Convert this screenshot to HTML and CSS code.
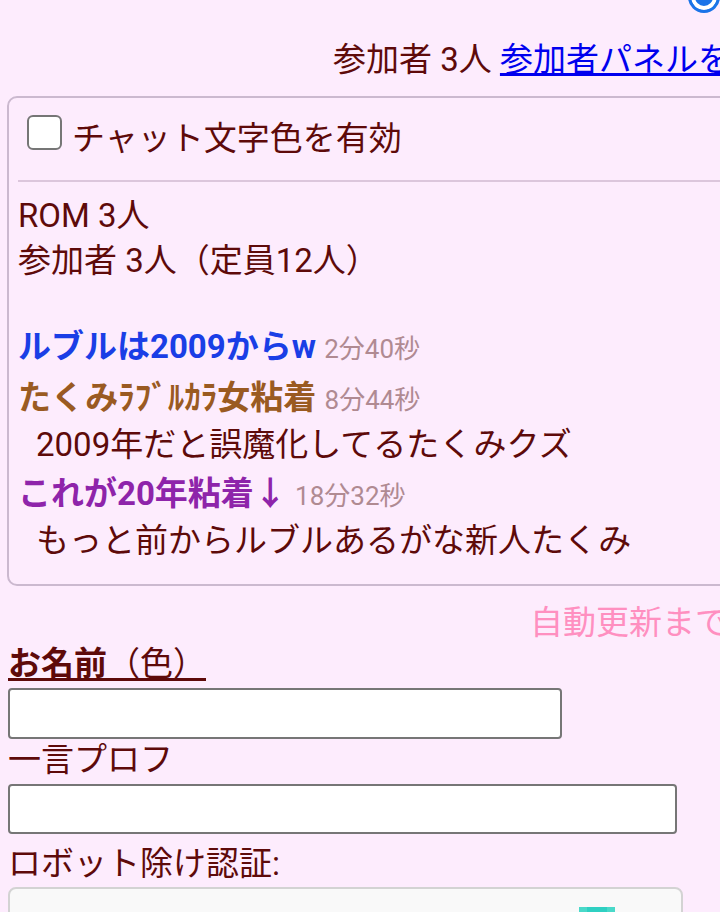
FILE: index.html
```html
<!DOCTYPE html>
<html lang="ja">
<head>
  <meta charset="UTF-8">
  <meta name="viewport" content="width=device-width, initial-scale=1.0">
  <title>チャット</title>
  <link rel="stylesheet" href="styles.css">
</head>
<body>

<!-- 上部 -->
<div class="top-row">
  <span class="radio checked"></span>
</div>

<div class="members">参加者 3人 <a href="#">参加者パネルを表示</a></div>

<!-- ログ -->
<div class="card">
  <div class="color-row">
    <span class="checkbox"></span>
    <span>チャット文字色を有効</span>
  </div>
  <hr class="sep">
  <div class="counts">
    <div>ROM 3人</div>
    <div>参加者 3人（定員12人）</div>
  </div>

  <div class="posts">
    <div class="post">
      <div class="name blue">ルブルは2009からw <span class="time">2分40秒</span></div>
    </div>
    <div class="post">
      <div class="name brown">たくみﾗﾌﾞﾙｶﾗ女粘着 <span class="time">8分44秒</span></div>
      <div class="msg">2009年だと誤魔化してるたくみクズ</div>
    </div>
    <div class="post">
      <div class="name purple">これが20年粘着↓ <span class="time">18分32秒</span></div>
      <div class="msg">もっと前からルブルあるがな新人たくみ</div>
    </div>
  </div>
</div>

<div class="reload">自動更新まで 30秒</div>

<!-- 投稿フォーム -->
<form class="form">
  <label class="label name-label"><b>お名前</b>（色）</label>
  <input type="text" class="field field-name">
  <label class="label">一言プロフ</label>
  <input type="text" class="field field-prof">
  <label class="label captcha-label">ロボット除け認証:</label>
  <div class="captcha">
    <svg class="captcha-logo" width="36" height="36" viewBox="0 0 36 36">
      <rect x="0" y="0" width="36" height="36" fill="#4ad9c9"/>
      <rect x="8" y="0" width="20" height="36" fill="#2fd0c2"/>
    </svg>
  </div>
</form>

</body>
</html>
```

FILE: styles.css
```css
* { box-sizing: border-box; }

body {
  margin: 0;
  padding: 0 0 0 8px;
  background-color: #fdecfd;
  color: #5e0a0a;
  font-family: Roboto, "Noto Sans CJK JP", sans-serif;
  font-size: 33px;
  overflow: hidden;
}

.top-row {
  display: flex;
  justify-content: flex-end;
  height: 32px;
  margin-top: -19px;
}

.radio {
  width: 32px;
  height: 32px;
  border-radius: 50%;
  border: 3px solid #1a73e8;
  background: #1a73e8;
  box-shadow: inset 0 0 0 4px #fff;
}

.members {
  margin-top: 24px;
  padding-left: 325px;
  line-height: 45px;
  white-space: nowrap;
}

.members a { color: #0000ee; }

.card {
  margin-top: 14px;
  margin-left: -1px;
  width: 780px;
  border: 2px solid #cbb9cf;
  border-radius: 10px;
  padding: 17px 0 21px 9px;
}

.color-row {
  display: flex;
  align-items: center;
  line-height: 45px;
}

.checkbox {
  width: 35px;
  height: 35px;
  margin: 0 10px 11px 9px;
  border: 2px solid #767676;
  border-radius: 6px;
  background: #fff;
}

.sep {
  margin: 19px 0 0;
  border: none;
  height: 2px;
  background: #dcc6dc;
}

.counts {
  margin-top: 11px;
  line-height: 45px;
}

.posts { margin-top: 42px; }

.post + .post { margin-top: 5px; }

.name {
  font-weight: bold;
  line-height: 44px;
  white-space: nowrap;
}

.name.blue { color: #1a3ee6; }
.name.brown { color: #9a5a22; }
.name.purple { color: #8e24aa; }

.time {
  font-weight: normal;
  font-size: 26px;
  color: #b08a92;
}

.msg {
  padding-left: 18px;
  line-height: 45px;
}

.reload {
  margin-top: 16px;
  padding-left: 522px;
  color: #ff8fc0;
  line-height: 41px;
  white-space: nowrap;
}

.form {
  display: flex;
  flex-direction: column;
  align-items: flex-start;
}

.label { line-height: 41px; }

.name-label {
  text-decoration: underline;
  text-underline-offset: 3px;
}

.field {
  margin-top: 4px;
  height: 51px;
  border: 2px solid #767676;
  border-radius: 4px;
  background: #fff;
}

.field-name { width: 554px; }
.field-prof { width: 669px; height: 50px; }

.captcha-label { margin-top: 9px; }

.captcha {
  margin-top: 3px;
  width: 675px;
  height: 150px;
  border: 2px solid #d3d3d3;
  border-radius: 8px;
  background: #f9f9f9;
  padding: 18px 0 0 569px;
}

.captcha-logo { display: block; }
```
